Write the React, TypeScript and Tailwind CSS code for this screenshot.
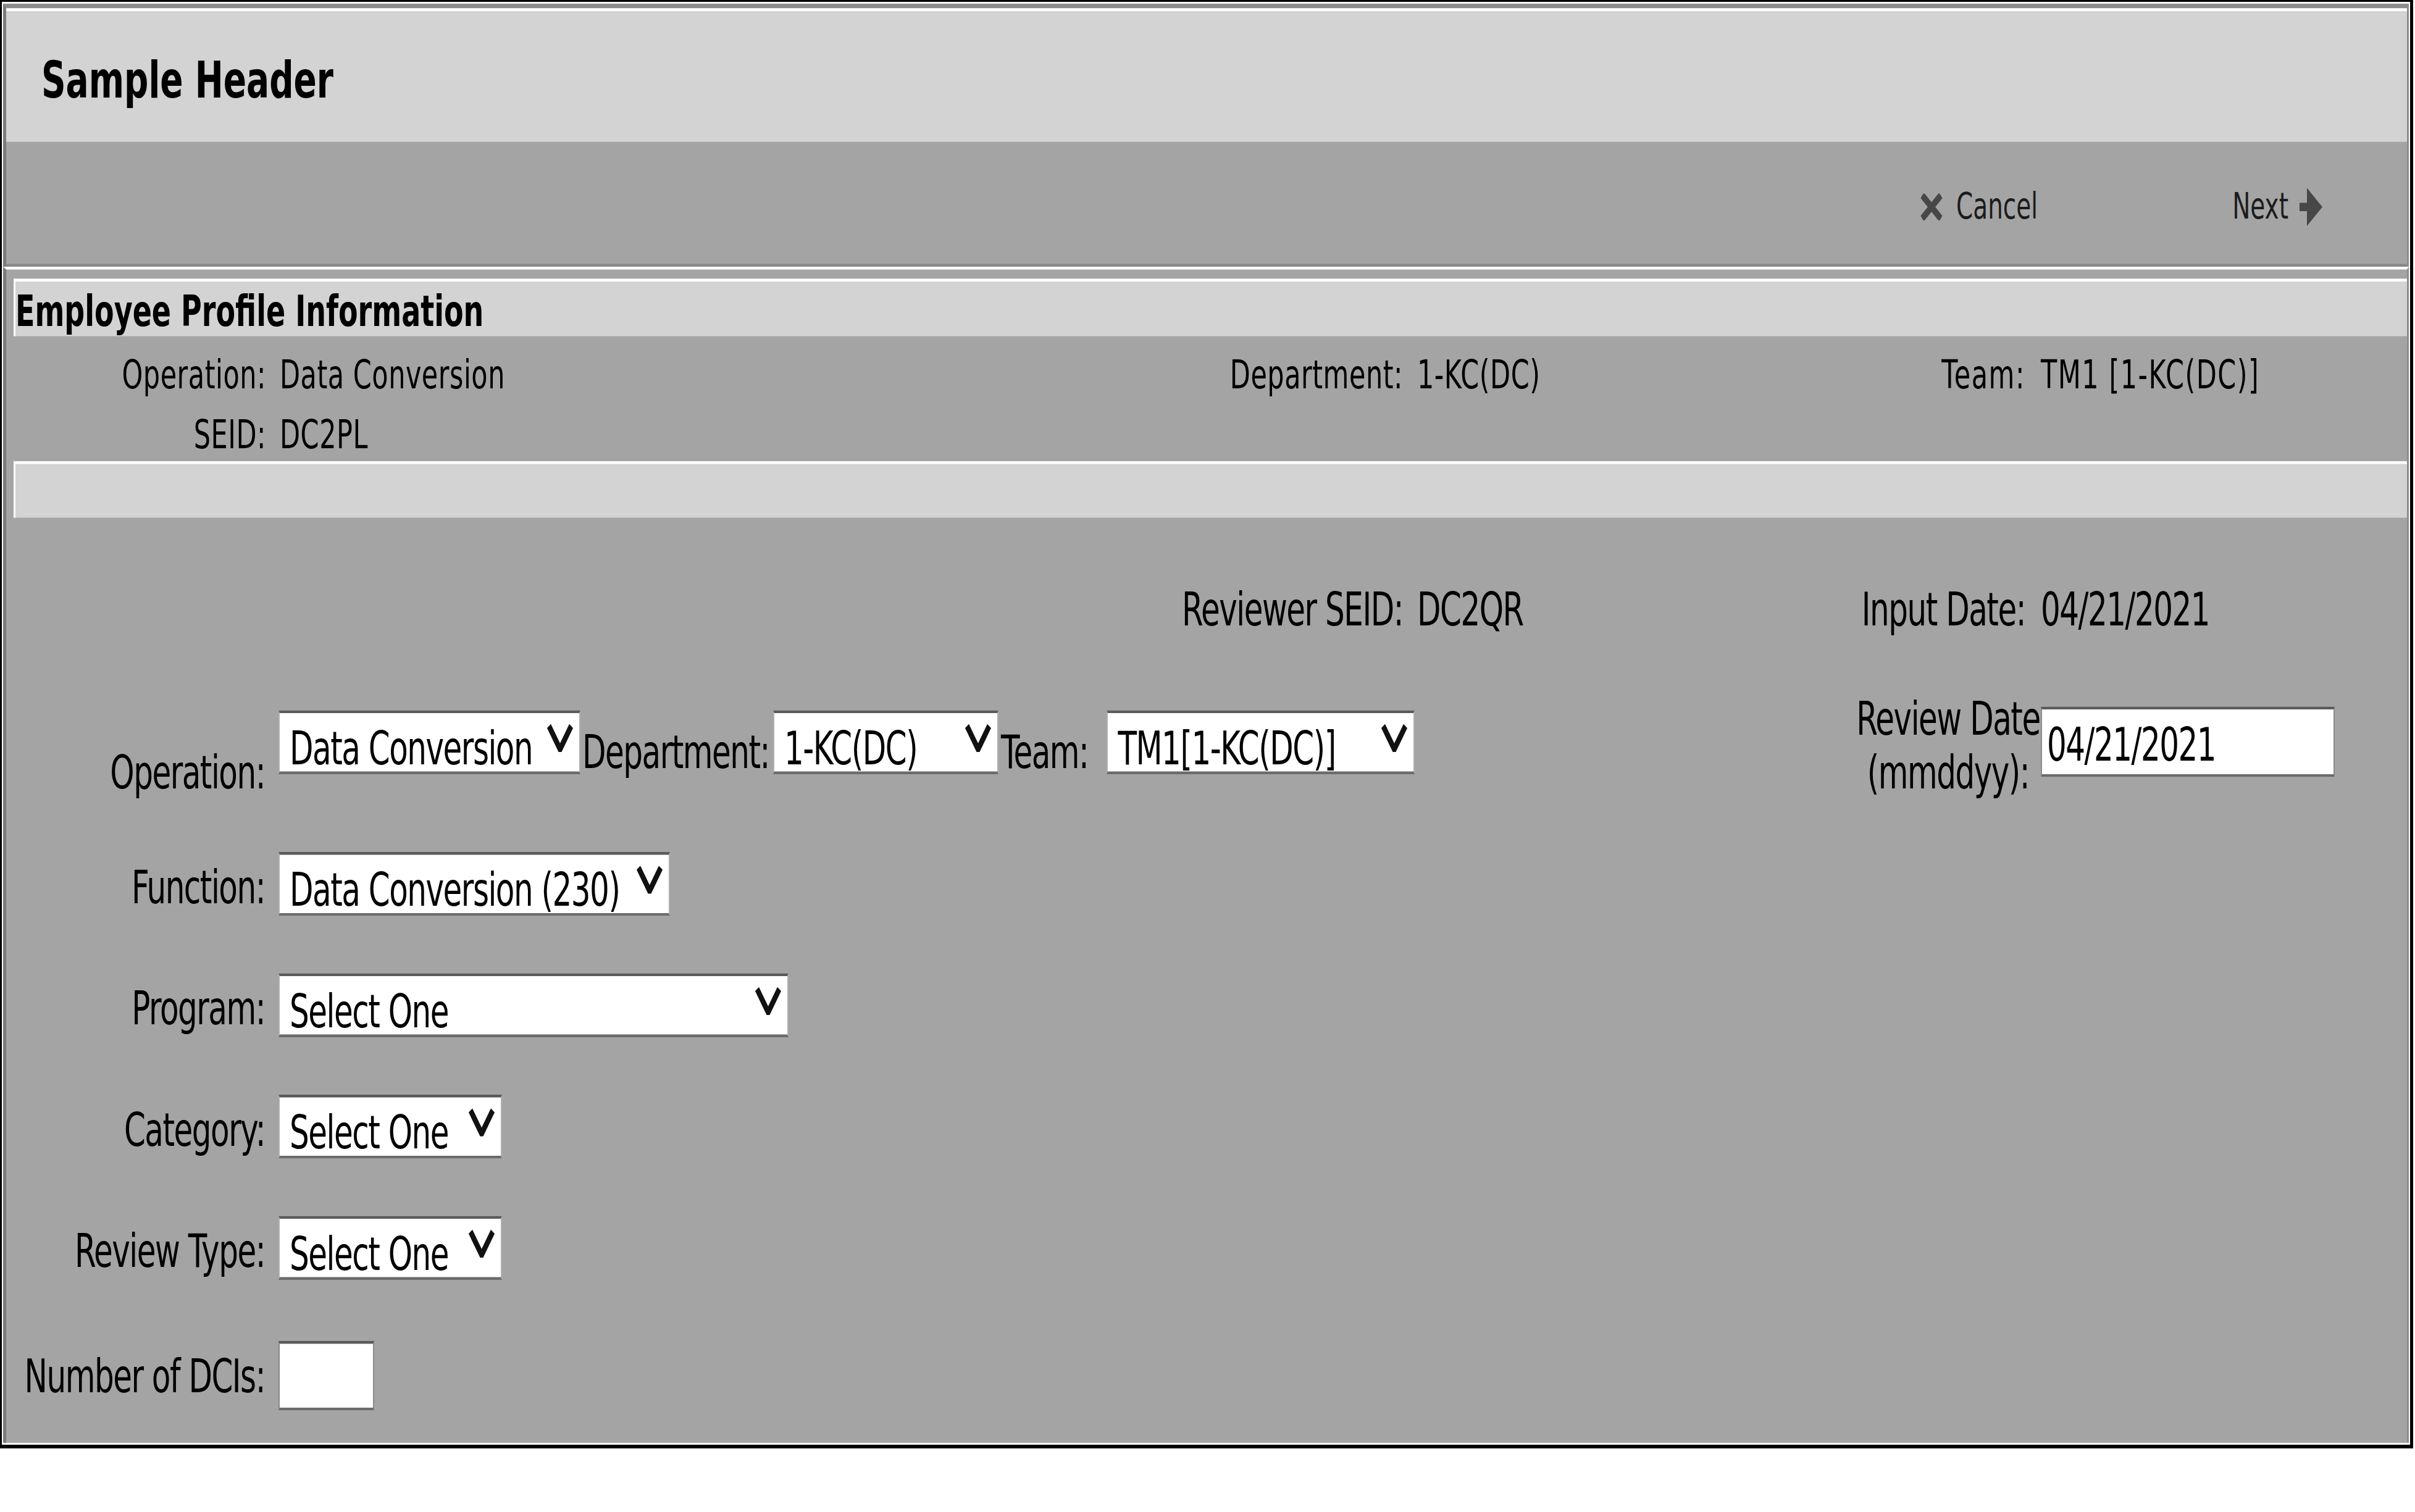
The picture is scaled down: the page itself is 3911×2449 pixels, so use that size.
import React from "react"

// the reference screenshot is stretched vertically, so the page is laid out
// at 2/3 height and scaled back up by 1.5 on the y axis

function Chevron() {
  return (
    <svg className="mt-[12px] shrink-0" width="46" height="30" viewBox="0 0 46 30">
      <polyline points="5,2 23,27 41,2" fill="none" stroke="#111" strokeWidth="7.5" />
    </svg>
  )
}

function Select({ className, children }: { className: string; children: React.ReactNode }) {
  return (
    <div className={`flex h-[69px] shrink-0 justify-between border-x-2 border-y-[3px] border-x-[#b0b0b0] border-t-[#5a5a5a] border-b-[#6b6b6b] bg-white pl-[16px] pr-[8px] ${className}`}>
      <div className="whitespace-nowrap pt-[9px]">{children}</div>
      <Chevron />
    </div>
  )
}

function TextBox({ className, value }: { className: string; value?: string }) {
  return (
    <div className={`shrink-0 border-x-2 border-y-[3px] border-x-[#8a8a8a] border-t-[#5a5a5a] border-b-[#6b6b6b] bg-white pl-[8px] pt-[9px] ${className}`}>
      {value}
    </div>
  )
}

function FormRow({ label, className, children }: { label: string; className: string; children: React.ReactNode }) {
  return (
    <div className={`flex items-start ${className}`}>
      <div className="mt-[9px] w-[429px] shrink-0 whitespace-nowrap pr-[22px] text-right">{label}</div>
      {children}
    </div>
  )
}

export default function App() {
  return (
    <div className="h-[2449px] w-[3911px] overflow-hidden bg-white">
      <div className="w-[3911px] origin-top scale-y-150 font-['DejaVu_Sans',Verdana,sans-serif] text-black">
        <div className="flex h-[1564px] w-[3908px] flex-col border-t-2 border-r-[5px] border-b-4 border-l-[3px] border-black bg-white p-[2px]">
          {/* header panel */}
          <div className="border-t-[5px] border-r-[3px] border-l-[5px] border-t-[#8c8c8c] border-r-[#8c8c8c] border-l-[#7a7a7a]">
            <div className="h-[144px] border-t-[3px] border-t-white bg-[#d3d3d3] pl-[57px] pt-[42px]">
              <h1 className="text-[55px] font-bold leading-[64px]">Sample Header</h1>
            </div>
            <div className="flex h-[135px] items-center justify-end border-b-[3px] border-b-[#888] bg-[#a4a4a4] pr-[137px] pt-[8px] text-[39px] leading-[46px]">
              <svg className="mr-[22px]" width="36" height="29" viewBox="0 0 36 29">
                <path d="M3 2 L33 27 M33 2 L3 27" stroke="#474747" strokeWidth="8" />
              </svg>
              <span className="text-[#1c1c1c]">Cancel</span>
              <span className="ml-[315px] text-[#1c1c1c]">Next</span>
              <svg className="ml-[18px]" width="37" height="41" viewBox="0 0 37 41">
                <rect x="0" y="16" width="16" height="9" fill="#474747" />
                <polygon points="12,0 37,20.5 12,41" fill="#474747" />
              </svg>
            </div>
          </div>

          {/* form panel */}
          <div className="flex flex-1 flex-col border-t-[3px] border-r-[3px] border-l-[5px] border-t-white border-r-[#8c8c8c] border-l-[#7a7a7a] bg-[#a4a4a4] pl-[12px]">
            <div className="mt-[10px] h-[62px] shrink-0 border-t-[3px] border-l-[3px] border-white bg-[#d3d3d3] pt-[5px]">
              <h2 className="text-[46px] font-bold leading-[54px]">Employee Profile Information</h2>
            </div>

            <div className="grid grid-cols-[431px_1047px_795px_605px_405px_1fr] gap-y-[15px] pt-[16px] text-[43px] leading-[50px] tracking-[0.5px]">
              <div className="pr-[22px] text-right">Operation:</div>
              <div>Data Conversion</div>
              <div className="pr-[23px] text-right">Department:</div>
              <div>1-KC(DC)</div>
              <div className="pr-[25px] text-right tracking-[1.5px]">Team:</div>
              <div className="tracking-[1.5px]">TM1 [1-KC(DC)]</div>
              <div className="pr-[22px] text-right">SEID:</div>
              <div>DC2PL</div>
            </div>

            <div className="mt-[4px] h-[61px] shrink-0 border-t-[3px] border-l-[3px] border-white bg-[#d3d3d3]" />

            <div className="text-[50px] leading-[58px] tracking-[-1.5px]">
              <div className="mt-[70px] grid grid-cols-[431px_1047px_795px_605px_405px_1fr]">
                <div />
                <div />
                <div className="whitespace-nowrap pr-[23px] text-right">Reviewer SEID:</div>
                <div>DC2QR</div>
                <div className="whitespace-nowrap pr-[25px] text-right">Input Date:</div>
                <div>04/21/2021</div>
              </div>

              <div className="mt-[60px] flex h-[116px] items-start pr-[117px]">
                <div className="mt-[58px] w-[429px] shrink-0 pr-[22px] text-right">Operation:</div>
                <Select className="mt-[20px] w-[489px]">Data Conversion</Select>
                <div className="mt-[36px] shrink-0 pl-[3px] pr-[6px]">Department:</div>
                <Select className="mt-[20px] w-[365px]">1-KC(DC)</Select>
                <div className="mt-[36px] shrink-0 pl-[4px] pr-[30px]">Team:</div>
                <Select className="mt-[20px] w-[499px]">TM1[1-KC(DC)]</Select>
                <div className="flex-1" />
                <div className="w-[300px] shrink-0 whitespace-nowrap text-center">
                  <div>Review Date</div>
                  <div>(mmddyy):</div>
                </div>
                <TextBox className="mt-[16px] h-[76px] w-[476px]" value="04/21/2021" />
              </div>

              <FormRow label="Function:" className="mt-[57px]">
                <Select className="w-[634px]">Data Conversion (230)</Select>
              </FormRow>
              <FormRow label="Program:" className="mt-[62px]">
                <Select className="w-[826px]">Select One</Select>
              </FormRow>
              <FormRow label="Category:" className="mt-[62px]">
                <Select className="w-[362px]">Select One</Select>
              </FormRow>
              <FormRow label="Review Type:" className="mt-[62px]">
                <Select className="w-[362px]">Select One</Select>
              </FormRow>
              <FormRow label="Number of DCIs:" className="mt-[66px]">
                <TextBox className="h-[75px] w-[155px]" />
              </FormRow>
            </div>
          </div>
        </div>
      </div>
    </div>
  )
}
